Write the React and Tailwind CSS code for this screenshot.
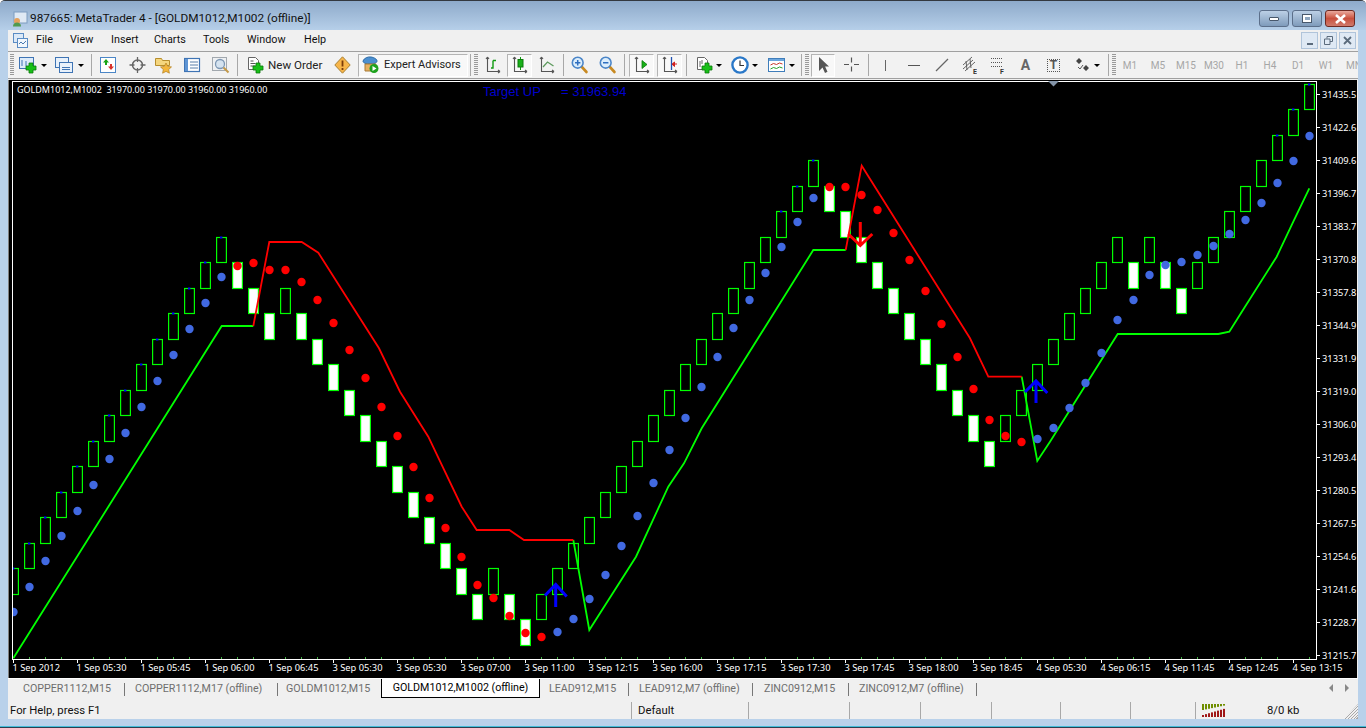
const ui = "font-['Roboto',sans-serif]"
const chartFont = "font-['Noto_Sans',sans-serif]"

// level -> y of the renko price ladder
const ly = (l) => Math.floor(84 + 25.5 * l) + 0.5
const bx = (i) => 8 + 16 * i
const cx = (i) => 13.5 + 16 * i

// [top level, up?] for every brick, left to right
const U = 1
const D = 0
const bricks = [
  [19, U], [18, U], [17, U], [16, U], [15, U], [14, U], [13, U], [12, U], [11, U], [10, U], [9, U], [8, U], [7, U], [6, U],
  [7, D], [8, D], [9, D], [8, U], [9, D], [10, D], [11, D], [12, D], [13, D], [14, D], [15, D], [16, D], [17, D], [18, D], [19, D], [20, D],
  [19, U], [20, D], [21, D], [20, U], [19, U], [18, U], [17, U], [16, U], [15, U], [14, U], [13, U], [12, U], [11, U], [10, U], [9, U], [8, U], [7, U], [6, U], [5, U], [4, U], [3, U],
  [4, D], [5, D], [6, D], [7, D], [8, D], [9, D], [10, D], [11, D], [12, D], [13, D], [14, D],
  [13, U], [12, U], [11, U], [10, U], [9, U], [8, U], [7, U], [6, U], [7, D], [6, U], [7, D], [8, D], [7, U], [6, U], [5, U], [4, U], [3, U], [2, U], [1, U], [0, U],
]
const ticked = [0, 1, 2, 3, 4, 5, 6, 7, 8, 9, 10, 11, 12, 13, 48, 49, 50, 79, 80, 81]

const blueDots = {
  0: 612, 1: 587, 2: 561, 3: 536, 4: 511, 5: 485, 6: 459, 7: 433, 8: 407, 9: 381, 10: 355, 11: 329, 12: 303, 13: 277,
  34: 632, 35: 619, 36: 599, 37: 575, 38: 546, 39: 516, 40: 483, 41: 450, 42: 418, 43: 387, 44: 357, 45: 328, 46: 300, 47: 273, 48: 247, 49: 222, 50: 198,
  64: 439, 65: 428, 66: 408, 67: 383, 68: 353, 69: 320, 70: 300, 71: 275, 72: 265, 73: 262, 74: 255, 75: 246, 76: 234, 77: 220, 78: 203, 79: 183, 80: 161, 81: 136,
}
const redDots = {
  14: 266, 15: 263, 16: 270, 17: 270, 18: 282, 19: 300, 20: 323, 21: 350, 22: 378, 23: 407, 24: 436, 25: 467, 26: 498, 27: 528, 28: 557, 29: 585, 30: 598, 31: 616, 32: 633, 33: 637,
  51: 187, 52: 187, 53: 195, 54: 210, 55: 233, 56: 260, 57: 291, 58: 324, 59: 357, 60: 389, 61: 420, 62: 436, 63: 442,
}

const greenLines = [
  "13.3,658.3 221.7,326 253.3,326",
  "573.3,540 589.3,630 636,556.7 668.3,486.7 684,463.3 701.7,428.3 813.3,250 845.7,250",
  "1021.7,376.7 1037.3,461 1050,441.7 1117.7,334 1218.3,334 1229.3,331.7 1245,306.7 1276.7,256.7 1293.3,221.7 1309.3,188.3",
]
const redLines = [
  "253.3,326 269.3,242 301.7,242 318.3,252.7 379,348.3 400,391.7 428.3,436.7 461.7,506.7 476.7,530 509.3,530 524,540 573.3,540",
  "845.7,250 861.7,165.7 900,226.7 970,338.3 988.3,376.7 1021.7,376.7",
]

const dates = [
  "1 Sep 2012", "1 Sep 05:30", "1 Sep 05:45", "1 Sep 06:00", "1 Sep 06:45", "3 Sep 05:30", "3 Sep 05:30", "3 Sep 07:00", "3 Sep 11:00", "3 Sep 12:15", "3 Sep 16:00",
  "3 Sep 17:15", "3 Sep 17:30", "3 Sep 17:45", "3 Sep 18:00", "3 Sep 18:45", "4 Sep 05:30", "4 Sep 06:15", "4 Sep 11:45", "4 Sep 12:45", "4 Sep 13:15",
]
const prices = [
  "31435.5", "31422.6", "31409.6", "31396.7", "31383.7", "31370.8", "31357.8", "31344.9", "31331.9", "31319.0", "31306.0", "31293.4", "31280.5", "31267.5", "31254.6", "31241.6", "31228.7", "31215.7",
]

const Chart = () => (
  <svg viewBox="9 80 1348 598" className={`block h-[598px] w-[1348px] shrink-0 bg-black ${chartFont}`}>
    <defs>
      <clipPath id="plot">
        <rect x="13" y="82" width="1303" height="577" />
      </clipPath>
    </defs>
    <path d="M12.5 659V81.5H1316.5V659" fill="none" stroke="#fff" shapeRendering="crispEdges" />
    <path d="M12 659.5H1317" stroke="#fff" shapeRendering="crispEdges" />
    <path d="M1048 81h11l-5.5 5.5z" fill="#8494a8" />
    <g clipPath="url(#plot)">
      {bricks.map(([l, up], i) => (
        <rect key={i} x={bx(i) + 0.6} y={ly(l)} width="9.8" height={ly(l + 1) - ly(l)} fill={up ? "none" : "#fff"} stroke="#00ff00" strokeWidth="1.2" />
      ))}
      {ticked.map((i) => (
        <rect key={i} x={cx(i) - 1.5} y={ly(bricks[i][0]) - 1} width="2.4" height="2" fill="#0000ff" />
      ))}
      {greenLines.map((p) => (
        <polyline key={p} points={p} fill="none" stroke="#00ff00" strokeWidth="1.8" />
      ))}
      {redLines.map((p) => (
        <polyline key={p} points={p} fill="none" stroke="#ff0000" strokeWidth="1.8" />
      ))}
      {Object.entries(blueDots).map(([i, y]) => (
        <circle key={i} cx={cx(+i)} cy={y} r="4.2" fill="#4169e1" />
      ))}
      {Object.entries(redDots).map(([i, y]) => (
        <circle key={i} cx={cx(+i)} cy={y} r="4.2" fill="#ff0000" />
      ))}
      <path d="M555.7 607V585M545 595.5L555.7 584.5 566.7 596.5" fill="none" stroke="#0000ff" strokeWidth="3" />
      <path d="M1036 403V381M1025 392L1036 381 1047.3 393" fill="none" stroke="#0000ff" strokeWidth="3" />
      <path d="M860.3 222V245M848.3 234L860.3 245.5 872.3 234" fill="none" stroke="#ff0000" strokeWidth="3" />
    </g>
    {bricks.map((_, i) =>
      i % 4 === 0 ? (
        <rect key={i} x={bx(i) + 5} y="659" width="1" height="4" fill="#fff" />
      ) : (
        <rect key={i} x={bx(i) + 5} y="657" width="1" height="2" fill="#43b043" />
      )
    )}
    {dates.map((d, i) => (
      <text key={d + i} x={12.5 + 64 * i} y="671" fill="#fff" className="text-[9.3px]">{d}</text>
    ))}
    {prices.map((p, i) => (
      <g key={p}>
        <rect x="1317" y={94 + 33 * i} width="3" height="1" fill="#fff" />
        <text x="1322" y={98 + 33 * i} fill="#fff" className="text-[9.3px]">{p}</text>
      </g>
    ))}
    <text x="17" y="92.5" fill="#fff" className="text-[9px]" xmlSpace="preserve">GOLDM1012,M1002  31970.00 31970.00 31960.00 31960.00</text>
    <text x="483" y="95.5" fill="#0000cd" className="font-['Liberation_Sans',sans-serif] text-[13px]">Target UP</text>
    <text x="561" y="95.5" fill="#0000cd" className="font-['Liberation_Sans',sans-serif] text-[13px]">= 31963.94</text>
  </svg>
)

const Ico = ({ w = 18, className = "", children }) => (
  <svg width={w} height="18" viewBox={`0 0 ${w} 18`} className={`shrink-0 ${className}`}>{children}</svg>
)

const Plus = ({ x = 9, y = 8 }) => (
  <path d={`M${x + 3} ${y}h4v3h3v4h-3v3h-4v-3h-3v-4h3z`} fill="#18c018" stroke="#0a7a0a" strokeWidth=".8" />
)

const Axes = ({ dark = "#555" }) => (
  <path d="M3.5 1V15.5H16M3.5 1L2 3M3.5 1L5 3M16 15.5L14 14M16 15.5L14 17" fill="none" stroke={dark} strokeWidth="1.1" />
)

const Magnifier = ({ minus }) => (
  <>
    <path d="M10 10l5.5 6" stroke="#c88a22" strokeWidth="2.6" strokeLinecap="round" />
    <circle cx="6.7" cy="6.7" r="5.4" fill="#dceefc" stroke="#4c86c8" strokeWidth="1.6" />
    <path d={minus ? "M4 6.7h5.4" : "M4 6.7h5.4M6.7 4v5.4"} stroke="#2f6fc0" strokeWidth="1.5" />
  </>
)

const Caret = ({ className = "" }) => <span className={`h-0 w-0 shrink-0 border-x-[3px] border-t-[3px] border-x-transparent border-t-black ${className}`} />
const Sep = ({ className = "" }) => <span className={`h-[22px] w-px shrink-0 bg-[#a8a8a8] ${className}`} />
const Grip = ({ className = "" }) => (
  <span className={`h-[22px] w-1 shrink-0 bg-[repeating-linear-gradient(to_bottom,#9a9a9a_0_1px,transparent_1px_2px)] ${className}`} />
)
const Pressed = ({ className = "", children }) => (
  <span className={`flex h-[23px] shrink-0 items-center justify-center border border-t-[#b4b4b4] border-l-[#b4b4b4] border-b-white border-r-white bg-[#f8f8f8] ${className}`}>{children}</span>
)

const Toolbar = () => (
  <div className={`flex h-[27px] shrink-0 items-center overflow-hidden border-t border-t-[#a0a0a0] bg-[#f2f2f2] text-[11px] text-[#222] ${ui}`}>
    <Grip className="ml-[2px]" />
    <Ico className="ml-[5px]">
      <rect x=".5" y="1.5" width="14" height="11" fill="#dcebfa" stroke="#3f74b4" />
      <path d="M3 4v6M7 5v5" stroke="#3f74b4" />
      <Plus x={7} y={7} />
    </Ico>
    <Caret className="ml-[4px]" />
    <Ico className="ml-[8px]">
      <rect x=".5" y="1.5" width="13" height="10" fill="#e8f1fb" stroke="#3f74b4" />
      <rect x="4.5" y="6.5" width="13" height="10" fill="#e8f1fb" stroke="#3f74b4" />
      <path d="M7 11.5h8M7 13.5h8" stroke="#3f74b4" />
    </Ico>
    <Caret className="ml-[5px]" />
    <Sep className="ml-[7px]" />
    <Ico w={17} className="ml-[8px]">
      <rect x=".5" y="1.5" width="15" height="15" fill="#fff" stroke="#4b86c6" />
      <path d="M6 3l3 3.5H7V9H5V6.5H3z" fill="#16a516" />
      <path d="M11 14l-3-3.5h2V8h2v2.5h2z" fill="#d8322a" />
    </Ico>
    <Ico w={17} className="ml-[12px]">
      <circle cx="8.5" cy="9" r="5" fill="none" stroke="#666" strokeWidth="1.5" />
      <path d="M8.5 1v5M8.5 12v5M.5 9h5M11.5 9h5" stroke="#666" strokeWidth="1.3" />
    </Ico>
    <Ico w={17} className="ml-[9px]">
      <path d="M.5 2.5h6l1 2h7v5h-14z" fill="#f5d67e" stroke="#b78e2d" />
      <path d="M11 7l1.7 3.4 3.8.5-2.8 2.6.7 3.7-3.4-1.8-3.4 1.8.7-3.7-2.8-2.6 3.8-.5z" fill="#f3b63c" stroke="#b5801f" strokeWidth=".7" />
    </Ico>
    <Ico w={17} className="ml-[12px]">
      <rect x=".5" y="2.5" width="15" height="13" fill="#fff" stroke="#3f74b4" strokeWidth="1.2" />
      <rect x="1" y="3" width="3" height="12" fill="#5f95d4" />
      <path d="M6 6h8M6 9h8M6 12h8" stroke="#5b7fa8" />
    </Ico>
    <Ico className="ml-[11px]">
      <rect x=".5" y="1.5" width="14" height="13" fill="#eef0f2" stroke="#a2a8ae" />
      <circle cx="8" cy="8" r="4.5" fill="#d5e3f0" stroke="#7d97b4" strokeWidth="1.3" />
      <path d="M11.5 11.5l5 5" stroke="#c49a4a" strokeWidth="2" />
    </Ico>
    <Sep className="ml-[7px]" />
    <Ico w={17} className="ml-[9px]">
      <path d="M1.5 1.5h7l3 3v9h-10z" fill="#fff" stroke="#666" />
      <path d="M3.5 5h3M3.5 7.5h5M3.5 10h5" stroke="#555" />
      <Plus x={6} y={7} />
    </Ico>
    <span className="ml-[4px] w-[57px] shrink-0 whitespace-nowrap pt-px text-[11.6px]">New Order</span>
    <Ico w={17} className="ml-[9px]">
      <path d="M8.5 .8L16.2 9 8.5 17.2.8 9z" fill="#f7b54a" stroke="#a88034" />
      <path d="M8.5 4.5v6M8.5 12v2" stroke="#7a3c0a" strokeWidth="1.8" />
    </Ico>
    <Pressed className="ml-[7px] w-[110px] justify-start pl-[3px]">
      <Ico>
        <path d="M1 5c1-3 5-4.5 8-4s6 2 6 4-3 3-7 3-7-1-7-3z" fill="#4b8fd0" stroke="#2c6aa4" />
        <path d="M3 8h11v7H3z" fill="#e8b060" stroke="#a87a34" />
        <circle cx="12" cy="12.5" r="4.5" fill="#1ea21e" />
        <path d="M10.5 10l4 2.5-4 2.5z" fill="#fff" />
      </Ico>
      <span className="ml-[4px] whitespace-nowrap pt-px">Expert Advisors</span>
    </Pressed>
    <Sep className="ml-[2px]" />
    <Grip className="ml-[3px]" />
    <Ico className="ml-[6px]">
      <Axes />
      <path d="M9 4.5h3M9 4.5V12H7" fill="none" stroke="#109a10" strokeWidth="1.4" />
    </Ico>
    <Pressed className="ml-[5px] w-[25px]">
      <Ico>
        <Axes />
        <path d="M9.5 1v13" stroke="#109a10" />
        <rect x="7" y="3.5" width="5" height="7.5" fill="#18b018" stroke="#0a7a0a" />
      </Ico>
    </Pressed>
    <Ico className="ml-[6px]">
      <Axes />
      <path d="M5 11l4.5-5 6 4" fill="none" stroke="#5d9a5d" strokeWidth="1.3" />
    </Ico>
    <Sep className="ml-[7px]" />
    <Ico className="ml-[7px]"><Magnifier /></Ico>
    <Ico className="ml-[10px]"><Magnifier minus /></Ico>
    <Sep className="ml-[7px]" />
    <Pressed className="ml-[4px] w-[25px]">
      <Ico>
        <Axes />
        <path d="M9 4.5l5 4-5 4z" fill="#16b016" stroke="#0a7a0a" strokeWidth=".8" />
      </Ico>
    </Pressed>
    <Pressed className="ml-[3px] w-[25px]">
      <Ico>
        <Axes />
        <path d="M10.5 1v13" stroke="#2050b0" strokeWidth="1.3" />
        <path d="M16 8h-2.5V6L11 8.2l2.5 2.3V8" fill="#d02020" stroke="#d02020" />
      </Ico>
    </Pressed>
    <Sep className="ml-[4px]" />
    <Ico className="ml-[9px]">
      <path d="M1.5 1.5h7l3 3v9h-10z" fill="#fff" stroke="#666" />
      <path d="M4 5v6M6 4v4" stroke="#666" />
      <Plus x={6} y={7} />
    </Ico>
    <Caret className="ml-[2px]" />
    <Ico className="ml-[9px]">
      <circle cx="9" cy="9" r="7.6" fill="#fff" stroke="#2a78c8" strokeWidth="2.4" />
      <path d="M9 4.5V9.5H13" fill="none" stroke="#333" strokeWidth="1.2" />
    </Ico>
    <Caret className="ml-[3px]" />
    <Ico className="ml-[10px]">
      <rect x=".5" y="2.5" width="16" height="13" fill="#fff" stroke="#3f7dba" />
      <rect x="1" y="3" width="15" height="2" fill="#6aa5dd" />
      <path d="M2.5 9l3-1.5 3 1 3-1.5 3 1" fill="none" stroke="#c8362a" />
      <path d="M2.5 13l3-1.5 3 1 3-1.5 3 1" fill="none" stroke="#2aa02a" />
    </Ico>
    <Caret className="ml-[3px]" />
    <Sep className="ml-[6px]" />
    <Grip className="ml-[3px]" />
    <Pressed className="ml-[2px] w-[24px]">
      <Ico w={12}>
        <path d="M2 1v14l3.5-3.5L8 17l2.5-1.2-2.4-5.3H12z" fill="#555" />
      </Ico>
    </Pressed>
    <Ico w={17} className="ml-[8px]">
      <path d="M8.5 1.5v5M8.5 10.5v5M1 8.5h5M11 8.5h5" stroke="#555" strokeWidth="1.2" />
    </Ico>
    <Sep className="ml-[8px]" />
    <span className="ml-[16px] h-[11px] w-px shrink-0 bg-[#666]" />
    <span className="ml-[22px] h-px w-[12px] shrink-0 bg-[#555]" />
    <Ico w={14} className="ml-[15px]"><path d="M1 15L13 3" stroke="#666" strokeWidth="1.2" /></Ico>
    <Ico w={15} className="ml-[13px]">
      <path d="M1 9L10 1M1 13L11 4M3 15L13 6M4 5l1 9M8 3l1 9" stroke="#555" strokeWidth=".9" fill="none" />
      <text x="11" y="17.5" fill="#333" className="text-[7px] font-bold">E</text>
    </Ico>
    <Ico w={15} className="ml-[13px]">
      <path d="M1 2.5h12M1 6.5h12M1 10.5h12" stroke="#555" strokeDasharray="1 1" />
      <text x="10" y="17.5" fill="#333" className="text-[7px] font-bold">F</text>
    </Ico>
    <span className="ml-[15px] w-[11px] shrink-0 text-center text-[14px] font-bold leading-none text-[#666]">A</span>
    <span className="ml-[16px] flex h-[13px] w-[13px] shrink-0 items-center justify-center border border-dotted border-[#555] text-[12px] font-bold leading-none text-[#555]">T</span>
    <Ico w={15} className="ml-[15px]">
      <path d="M4 2l3 3-3 3-3-3zM11 9l3 3-3 3-3-3z" fill="#444" />
      <path d="M3 11l2 2 3-4" fill="none" stroke="#555" />
    </Ico>
    <Caret className="ml-[4px]" />
    <Sep className="ml-[8px]" />
    <Grip className="ml-[3px]" />
    {["M1", "M5", "M15", "M30", "H1", "H4", "D1", "W1", "MN"].map((p) => (
      <span key={p} className="w-[28px] shrink-0 text-center text-[10px] text-[#a6a6a6]">{p}</span>
    ))}
  </div>
)

const WinBtn = ({ className = "", children }) => (
  <div className={`flex h-[17px] w-[30px] items-center justify-center rounded-[3px] border border-[#5c6f8a] ${className}`}>{children}</div>
)

const MdiBtn = ({ children }) => (
  <div className="flex h-[17px] w-[17px] items-center justify-center border border-[#b0c4da] bg-[#dfe9f4]">{children}</div>
)

const tabs = [
  ["COPPER1112,M15", "w-[117px] pl-[15px]", true],
  ["COPPER1112,M17 (offline)", "w-[153px] pl-[10px]", true],
  ["GOLDM1012,M15", "w-[103px] pl-[8px]", false],
  ["GOLDM1012,M1002 (offline)", "active"],
  ["LEAD912,M15", "w-[89px] pl-[9px]", true],
  ["LEAD912,M7 (offline)", "w-[124px] pl-[10px]", true],
  ["ZINC0912,M15", "w-[96px] pl-[11px]", true],
  ["ZINC0912,M7 (offline)", "w-[128px] pl-[10px]", true],
]

const statusCells = [
  ["For Help, press F1", "w-[624px] pl-[2px] pt-[2px]"],
  ["Default", "w-[117px] pl-[6px] pt-[2px]"],
  ["", "w-[101px]"],
  ["", "w-[71px]"],
  ["", "w-[71px]"],
  ["", "w-[69px]"],
  ["", "w-[70px]"],
  ["", "w-[65px]"],
]

export default function App() {
  return (
    <div className={`flex h-[728px] w-[1366px] flex-col overflow-hidden rounded-t-[5px] border-t border-t-[#33383f] bg-[#b9d1ea] ${ui}`}>
      <div className="flex h-[29px] shrink-0 items-center bg-gradient-to-b from-[#8eaaca] to-[#b6cfe9] pl-[12px] pr-[11px] pt-[6px]">
        <svg width="16" height="16" viewBox="0 0 16 16" className="shrink-0">
          <rect x="2" y="1" width="13" height="11" fill="#dfe9f4" stroke="#7d9cc0" />
          <circle cx="5" cy="10" r="3" fill="#e4a05c" />
          <path d="M1 15.5c0-3 2-4 4-4s4 1 4 4z" fill="#4f9a4f" />
        </svg>
        <span className="ml-[2px] whitespace-nowrap pt-px text-[11.8px] text-[#111]">987665: MetaTrader 4 - [GOLDM1012,M1002 (offline)]</span>
        <div className="ml-auto flex items-center gap-[3px]">
          <WinBtn className="bg-gradient-to-b from-[#bcd0e6] to-[#7f9bbb]">
            <span className="h-[4px] w-[10px] rounded-[1px] border border-[#48586c] bg-white" />
          </WinBtn>
          <WinBtn className="bg-gradient-to-b from-[#bcd0e6] to-[#7f9bbb]">
            <span className="flex h-[9px] w-[10px] items-center justify-center border border-[#48586c] bg-white"><span className="h-[3px] w-[5px] bg-[#8ea6c0]" /></span>
          </WinBtn>
          <WinBtn className="border-[#6e2a22] bg-gradient-to-b from-[#e8a89c] via-[#c9503e] to-[#cf7a6c]">
            <svg width="13" height="10" viewBox="0 0 13 10"><path d="M2 1l9 8M11 1l-9 8" stroke="#fff" strokeWidth="2.6" /></svg>
          </WinBtn>
        </div>
      </div>

      <div className="mx-[8px] flex min-h-0 flex-1 flex-col">
        <div className="flex h-[21px] shrink-0 items-center bg-[#f0f0f0] text-[10.8px] text-[#111]">
          <svg width="16" height="16" viewBox="0 0 16 16" className="ml-[5px] shrink-0">
            <rect x=".5" y=".5" width="10" height="9" fill="#dce9f7" stroke="#5b8cc4" />
            <rect x="4.5" y="5.5" width="10" height="9" fill="#f2f7fc" stroke="#5b8cc4" />
            <path d="M6 11l2-2 2 2 3-3" fill="none" stroke="#4b7ab0" />
          </svg>
          <span className="ml-[7px] w-[34px]">File</span>
          <span className="w-[41px]">View</span>
          <span className="w-[43px]">Insert</span>
          <span className="w-[49px]">Charts</span>
          <span className="w-[44px]">Tools</span>
          <span className="w-[57px]">Window</span>
          <span>Help</span>
          <div className="ml-auto flex gap-[2px] pr-[2px]">
            <MdiBtn><span className="mt-[6px] h-[2px] w-[6px] bg-[#5b6b7c]" /></MdiBtn>
            <MdiBtn>
              <svg width="9" height="9" viewBox="0 0 9 9"><path d="M3 2.5V.5h5.5v5H6M.5 3h5.5v5.5H.5z" fill="none" stroke="#5b6b7c" /></svg>
            </MdiBtn>
            <MdiBtn>
              <svg width="9" height="9" viewBox="0 0 9 9"><path d="M1 1l7 7M8 1l-7 7" stroke="#5b6b7c" strokeWidth="1.8" /></svg>
            </MdiBtn>
          </div>
        </div>

        <Toolbar />

        <div className="flex h-[2px] shrink-0 flex-col">
          <div className="h-px bg-[#a0a0a0]" />
          <div className="h-px bg-[#f0f0f0]" />
        </div>

        <div className="flex h-[598px] shrink-0 overflow-hidden border-x border-l-[#808080] border-r-[#f0f0f0]">
          <Chart />
        </div>

        <div className="h-px shrink-0 bg-white" />

        <div className="flex h-[20px] shrink-0 items-start overflow-hidden bg-[#f0f0f0] text-[10.7px] text-[#6e6e6e]">
          {tabs.map(([label, cls, hasSep]) =>
            cls === "active" ? (
              <div key={label} className="flex h-[19px] w-[159px] shrink-0 items-center justify-center border-x border-b border-black bg-white pt-px text-black">{label}</div>
            ) : (
              <div key={label} className={`flex h-[19px] shrink-0 items-center justify-between whitespace-nowrap pt-px ${cls}`}>
                {label}
                {hasSep && <span className="h-[13px] w-px bg-[#777]" />}
              </div>
            )
          )}
          <div className="ml-auto flex h-[18px] items-center gap-[12px] pr-[9px]">
            <span className="h-0 w-0 border-y-[4px] border-r-[4px] border-y-transparent border-r-[#888]" />
            <span className="h-0 w-0 border-y-[4px] border-l-[4px] border-y-transparent border-l-[#888]" />
          </div>
        </div>

        <div className="flex h-[20px] shrink-0 items-end bg-[#f0f0f0] text-[11.3px] text-[#111]">
          {statusCells.map(([label, cls], i) => (
            <div key={i} className={`flex h-[17px] shrink-0 items-center border-r border-[#a8a8a8] whitespace-nowrap ${cls}`}>{label}</div>
          ))}
          <svg width="24" height="13" viewBox="0 0 24 13" className="mb-[2px] ml-[6px] shrink-0">
            {Array.from({ length: 8 }, (_, i) => (
              <g key={i}>
                <rect x={i * 3} y="0" width="2" height={6 - (i * 5) / 8} fill="#6f8e00" />
                <rect x={i * 3} y={12 - (i * 7) / 8 - 1} width="2" height={(i * 7) / 8 + 2} fill="#a01818" />
              </g>
            ))}
          </svg>
          <span className="ml-[41px] flex h-[17px] items-center pt-[2px]">8/0 kb</span>
          <div className="ml-auto h-[15px] w-[14px] bg-[repeating-linear-gradient(135deg,transparent_0_1px,#a8a8a8_1px_2px)] [clip-path:polygon(100%_0,100%_100%,0_100%)]" />
        </div>
      </div>

      <div className="h-px shrink-0 bg-[#43bcd8]" />
      <div className="h-px shrink-0 bg-[#2c3e50]" />
    </div>
  )
}
